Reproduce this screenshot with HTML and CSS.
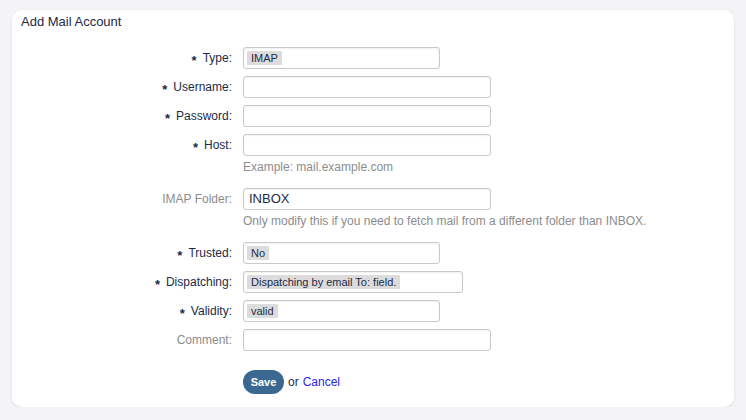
FILE: index.html
```html
<!DOCTYPE html>
<html>
<head>
<meta charset="utf-8">
<link rel="stylesheet" href="styles.css">
</head>
<body>
<div class="card">
  <h2 class="title">Add Mail Account</h2>
  <form class="form">
    <div class="row">
      <label class="label req"><span class="mark">*</span>Type:</label>
      <div class="field"><div class="select w197"><span class="pill">IMAP</span></div></div>
    </div>
    <div class="row">
      <label class="label req"><span class="mark">*</span>Username:</label>
      <div class="field"><div class="input"></div></div>
    </div>
    <div class="row">
      <label class="label req"><span class="mark">*</span>Password:</label>
      <div class="field"><div class="input"></div></div>
    </div>
    <div class="row">
      <label class="label req"><span class="mark">*</span>Host:</label>
      <div class="field"><div class="input"></div><p class="hint">Example: mail.example.com</p></div>
    </div>
    <div class="row">
      <label class="label opt">IMAP Folder:</label>
      <div class="field"><div class="input">INBOX</div><p class="hint">Only modify this if you need to fetch mail from a different folder than INBOX.</p></div>
    </div>
    <div class="row">
      <label class="label req"><span class="mark">*</span>Trusted:</label>
      <div class="field"><div class="select w197"><span class="pill">No</span></div></div>
    </div>
    <div class="row">
      <label class="label req"><span class="mark">*</span>Dispatching:</label>
      <div class="field"><div class="select w220"><span class="pill">Dispatching by email To: field.</span></div></div>
    </div>
    <div class="row">
      <label class="label req"><span class="mark">*</span>Validity:</label>
      <div class="field"><div class="select w197"><span class="pill">valid</span></div></div>
    </div>
    <div class="row">
      <label class="label opt">Comment:</label>
      <div class="field"><div class="input"></div></div>
    </div>
    <div class="row actions">
      <span class="label"></span>
      <div class="field buttons"><button type="button" class="save">Save</button><span class="or">or</span><a class="cancel" href="#">Cancel</a></div>
    </div>
  </form>
</div>
</body>
</html>
```
FILE: styles.css
```css
html, body {
  margin: 0;
  padding: 0;
  background: #f4f4f7;
}
body {
  padding: 10px 12px 0 12px;
  font-family: "Liberation Sans", Arial, sans-serif;
  color: #1d2a47;
}
.card {
  background: #fff;
  border-radius: 10px;
  box-shadow: 0 1px 3px rgba(40, 40, 80, 0.12);
  height: 397px;
  box-sizing: border-box;
  padding: 4px 0 0 0;
}
.title {
  margin: 0;
  padding: 0 9px;
  font-size: 13px;
  font-weight: normal;
  line-height: 16px;
  color: #1d2a47;
}
.form {
  margin-top: 17px;
}
.row {
  display: grid;
  grid-template-columns: 220px 1fr;
  column-gap: 11px;
  margin-bottom: 7px;
}
.label {
  font-size: 12px;
  line-height: 22px;
  height: 22px;
  text-align: right;
  white-space: nowrap;
}
.label.req { color: #1d2a47; }
.label.opt { color: #8c8c8c; }
.mark {
  display: inline-block;
  font-size: 13px;
  font-weight: bold;
  vertical-align: -3px;
  margin-right: 6px;
  color: #1d2a47;
}
.input, .select {
  box-sizing: border-box;
  height: 22px;
  border: 1px solid #c8c8c8;
  border-radius: 3px;
  background: #fff;
  box-shadow: inset 0 1px 2px rgba(0, 0, 0, 0.06);
}
.input {
  width: 248px;
  font-size: 13px;
  line-height: 20px;
  padding: 0 5px;
  color: #1d2a47;
}
.select {
  display: flex;
  align-items: center;
  padding: 0 3px;
}
.w197 { width: 197px; }
.w220 { width: 220px; }
.pill {
  background: #dcdcdc;
  color: #1d2a47;
  font-size: 11px;
  line-height: 14px;
  padding: 0 4px;
  border-radius: 1px;
}
.hint {
  margin: 4px 0 7px 0;
  font-size: 12px;
  line-height: 14px;
  color: #8c8c8c;
}
.actions {
  margin-top: 19px;
}
.buttons {
  display: flex;
  align-items: center;
  height: 24px;
  font-size: 12px;
}
.save {
  height: 24px;
  width: 41px;
  padding: 0;
  border: none;
  border-radius: 12px;
  background: #3b6890;
  color: #fff;
  font-family: "Liberation Sans", Arial, sans-serif;
  font-weight: bold;
  font-size: 11px;
}
.or {
  margin: 0 4px;
  color: #1d2a47;
}
.cancel {
  color: #2a22f0;
  text-decoration: none;
}
```
